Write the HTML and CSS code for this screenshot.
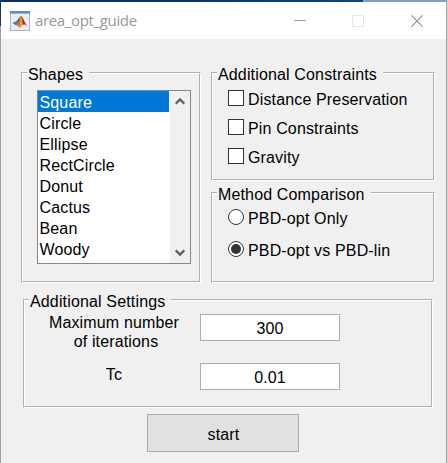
FILE: index.html
```html
<!DOCTYPE html>
<html lang="en">
<head>
<meta charset="utf-8">
<title>area_opt_guide</title>
<link rel="stylesheet" href="styles.css">
</head>
<body>
<div class="window">
  <header class="titlebar">
    <svg class="app-icon" width="20" height="20" viewBox="0 0 20 20">
      <rect x=".5" y=".5" width="19" height="19" fill="#e9eef2" stroke="#aab4bc"/>
      <rect x="0" y="0" width="20" height="2.6" fill="#5f8fbb"/>
      <path d="M2.5 12 6.3 10 8.6 12 6 14.4z" fill="#3f86b8"/>
      <path d="M6.3 10C8.5 9 9 6.3 11 4.7L8.6 12z" fill="#2a5f94"/>
      <path d="M11 4.7C9.8 8 8.6 12.5 6 14.4 8 14 8.8 15.9 9.8 16.7 12 15.4 12.7 12.6 13.3 10z" fill="#e2641c"/>
      <path d="M11 4.7C10.2 8 10 12 9.2 15.9L9.8 16.7C11.5 15.5 12 13.5 12.6 11z" fill="#f4a12c"/>
      <path d="M11 4.7C13.2 6 14.5 12 17.4 15 15.5 13.6 14.2 12.9 12.6 14 12.9 10 12 7 11 4.7z" fill="#a52f18"/>
    </svg>
    <span class="title">area_opt_guide</span>
    <svg class="controls" width="129" height="12" viewBox="0 0 129 12">
      <path d="M0 5.5H12" stroke="#999"/>
      <rect x="58.5" y=".5" width="11" height="11" fill="none" stroke="#e6e6e6"/>
      <path d="M117.3 .3 128.7 11.7M128.7 .3 117.3 11.7" stroke="#929292" stroke-width="1.1"/>
    </svg>
  </header>
  <main class="content">
    <div class="columns">
      <section class="panel shapes"><div class="inner">
        <h2 class="legend">Shapes</h2>
        <div class="listbox">
          <ul class="items">
            <li class="item selected">Square</li>
            <li class="item">Circle</li>
            <li class="item">Ellipse</li>
            <li class="item">RectCircle</li>
            <li class="item">Donut</li>
            <li class="item">Cactus</li>
            <li class="item">Bean</li>
            <li class="item">Woody</li>
          </ul>
          <div class="scrollbar">
            <svg width="10" height="8" viewBox="0 0 10 8"><path d="M.7 6.8 5 2.5 9.3 6.8" fill="none" stroke="#606060" stroke-width="2.3"/></svg>
            <svg width="10" height="8" viewBox="0 0 10 8"><path d="M.7 1.2 5 5.5 9.3 1.2" fill="none" stroke="#606060" stroke-width="2.3"/></svg>
          </div>
        </div>
      </div></section>
      <div class="right">
        <section class="panel constraints"><div class="inner">
          <h2 class="legend">Additional Constraints</h2>
          <div class="option"><span class="check"></span><span class="text">Distance Preservation</span></div>
          <div class="option"><span class="check"></span><span class="text">Pin Constraints</span></div>
          <div class="option"><span class="check"></span><span class="text">Gravity</span></div>
        </div></section>
        <section class="panel method"><div class="inner">
          <h2 class="legend">Method Comparison</h2>
          <div class="option"><span class="radio"></span><span class="text">PBD-opt Only</span></div>
          <div class="option"><span class="radio on"></span><span class="text">PBD-opt vs PBD-lin</span></div>
        </div></section>
      </div>
    </div>
    <section class="panel settings"><div class="inner">
      <h2 class="legend">Additional Settings</h2>
      <div class="row"><div class="label">Maximum number<br><span class="second">of iterations</span></div><div class="field">300</div></div>
      <div class="row"><div class="label">Tc</div><div class="field">0.01</div></div>
    </div></section>
    <div class="start">start</div>
  </main>
</div>
</body>
</html>
```
FILE: styles.css
```css
* { box-sizing: border-box; }
body {
  margin: 0;
  background: #a0a0a0;
  font: 16px/20px "Liberation Sans", Arial, sans-serif;
  letter-spacing: .15px;
  color: #000;
}
.window {
  height: 463px;
  padding: 0 1px;
  background:
    linear-gradient(#0f3766, #0f3766) 0 0 / 1px 26px no-repeat,
    linear-gradient(90deg, #a0a0a0 1px, #f0f0f0 1px calc(100% - 1px), #a0a0a0 calc(100% - 1px));
}
.titlebar {
  display: flex;
  align-items: center;
  height: 39px;
  padding: 0 23px 0 9px;
  border-top: 2px solid #0a3265;
  border-image: linear-gradient(90deg, #08305f 0 30%, #0c4488 81%, #7f9fc4 81% 100%) 2;
  background: #fff;
}
.app-icon { display: block; }
.title {
  flex: 1;
  margin-left: 5px;
  padding-bottom: 1px;
  font: 15px/20px "Open Sans", sans-serif;
  letter-spacing: -.35px;
  color: #999;
}
.controls { display: block; }
.content { padding: 33px 11px 0 20px; }
.columns { display: flex; gap: 10px; }
.right { display: flex; flex-direction: column; gap: 11px; width: 224px; }
.panel {
  border: 1px solid;
  border-color: #b0b0b0 #fff #fff #b0b0b0;
}
.inner {
  height: 100%;
  border: 1px solid;
  border-color: #fff #b0b0b0 #b0b0b0 #fff;
}
.shapes { width: 180px; height: 211px; }
.constraints { height: 109px; }
.method { height: 91px; }
.settings { width: 410px; height: 109px; margin: 16px 0 0 2px; }
.legend {
  width: max-content;
  height: 20px;
  margin: -10px 0 0 4px;
  padding: 1px 6px 0 1px;
  background: #f0f0f0;
  font: inherit;
}
.listbox {
  display: flex;
  width: 154px;
  height: 174px;
  margin: 6px 0 0 14px;
  border: 1px solid #828790;
  background: #fff;
}
.items { width: 131px; margin: 0; padding: 0; list-style: none; }
.item { height: 21px; padding: 2px 0 0 1.5px; line-height: 19px; }
.selected { background: #0078d7; color: #fff; }
.scrollbar {
  display: flex;
  flex-direction: column;
  justify-content: space-between;
  align-items: center;
  width: 20px;
  margin-left: 1px;
  padding: 6px 1px 6px 0;
  background: #f0f0f0;
}
.option { display: flex; align-items: center; height: 20px; margin-left: 15px; gap: 4px; }
.text { height: 20px; line-height: 24px; }
.check { width: 16px; height: 16px; border: 1px solid #333; background: #fff; }
.constraints .option { margin-bottom: 9px; }
.constraints .legend { margin-bottom: 4px; }
.method .option { margin-bottom: 12px; }
.method .legend { margin-bottom: 3px; }
.radio { display: grid; place-items: center; width: 16px; height: 16px; border: 1px solid #333; border-radius: 50%; background: #fff; }
.on::after { content: ""; width: 10px; height: 10px; border-radius: 50%; background: #333; }
.row { display: flex; height: 49px; }
.settings .legend { margin-bottom: 3px; }
.label { width: 175px; padding-left: 3px; line-height: 19px; text-align: center; margin-top: -1px; }
.second { padding-left: 4px; }
.row:last-child .label { padding-top: 3px; }
.field {
  width: 140px;
  height: 27px;
  padding-top: 4px;
  border: 1px solid #abadb3;
  background: #fff;
  text-align: center;
}
.start {
  width: 152px;
  height: 38px;
  margin: 6px 0 0 126px;
  padding: 10px 0 0 1px;
  border: 1px solid #adadad;
  background: #e1e1e1;
  text-align: center;
}
```
